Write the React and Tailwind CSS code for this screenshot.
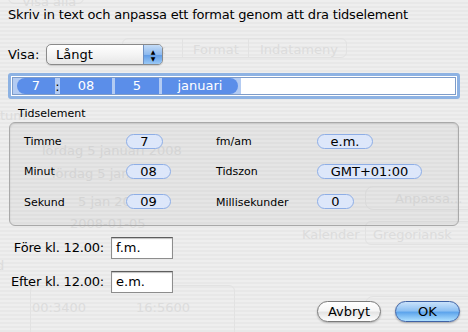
import React from 'react';

const font = { fontFamily: '"Lucida Grande", "DejaVu Sans", sans-serif' };

function Ghost() {
  // faint preferences pane showing through the sheet
  const g = 'absolute text-[#dcdcdc] text-[13px] whitespace-nowrap';
  return (
    <div className="absolute inset-0 pointer-events-none">
      <div className="absolute left-[8px] top-[-12px] w-[76px] h-[16px] rounded-md border border-[#e0e0e0]" />
      <span className={`${g} left-[22px] top-[-8px]`}>Visa alla</span>
      <div className="absolute left-[122px] top-[38px] w-[225px] h-[20px] rounded-md border border-[#e2e2e2] flex">
        <div className="w-[60px] border-r border-[#e2e2e2]" />
        <div className="w-[66px] border-r border-[#e2e2e2]" />
      </div>
      <span className={`${g} left-[158px] top-[40px]`}>k</span>
      <span className={`${g} left-[193px] top-[40px]`}>Format</span>
      <span className={`${g} left-[260px] top-[40px]`}>Indatameny</span>
      <span className={`${g} left-[-18px] top-[106px]`}>Datum</span>
      <span className={`${g} left-[42px] top-[141px]`}>lördag 5 januari 2008</span>
      <span className={`${g} left-[52px] top-[164px]`}>lördag 5 jan 2008</span>
      <span className={`${g} left-[78px] top-[192px]`}>5 jan 2008</span>
      <span className={`${g} left-[70px] top-[214px]`}>2008-01-05</span>
      <div className="absolute left-[365px] top-[186px] w-[110px] h-[24px] rounded-lg border border-[#e2e2e2]" />
      <span className={`${g} left-[395px] top-[189px]`}>Anpassa...</span>
      <span className={`${g} left-[302px] top-[225px]`}>Kalender</span>
      <div className="absolute left-[365px] top-[221px] w-[110px] h-[24px] rounded-md border border-[#e2e2e2]" />
      <span className={`${g} left-[373px] top-[225px]`}>Gregoriansk</span>
      <span className={`${g} left-[-4px] top-[256px]`}>d</span>
      <div className="absolute left-[30px] top-[285px] w-[205px] h-[60px] rounded-md border border-[#e2e2e2]" />
      <span className={`${g} left-[32px] top-[298px]`}>00:3400</span>
      <span className={`${g} left-[136px] top-[298px]`}>16:5600</span>
      <div className="absolute left-[365px] top-[296px] w-[110px] h-[24px] rounded-lg border border-[#e2e2e2]" />
      <span className={`${g} left-[395px] top-[298px]`}>Anpassa...</span>
    </div>
  );
}

function Token({ children, shape }) {
  return (
    <div className={`h-[16px] flex items-center justify-center bg-[#5b8ee9] text-white text-[13px] ${shape}`}>
      {children}
    </div>
  );
}

function Pill({ children, w }) {
  return (
    <div className={`${w} h-[15px] rounded-full border border-[#8eaee6] bg-[#dde7fa] flex items-center justify-center text-[13px] leading-none text-black`}>
      {children}
    </div>
  );
}

function Field({ value }) {
  return (
    <div className="w-[62px] h-[22px] bg-white border border-[#8d8d8d] border-t-[#5e5e5e] shadow-[inset_0_1px_1px_rgba(0,0,0,0.25)] flex items-center px-[4px] text-[13px]">
      {value}
    </div>
  );
}

export default function App() {
  return (
    <div
      className="relative w-[468px] h-[332px] overflow-hidden text-black bg-[repeating-linear-gradient(to_bottom,#eeeeee_0px,#eeeeee_2px,#e8e8e8_2px,#e8e8e8_4px)]"
      style={font}
    >
      <Ghost />
      <div className="relative flex flex-col">
        <p className="pl-[8px] pt-[7px] text-[13px] leading-[16px] tracking-[-0.2px]">
          Skriv in text och anpassa ett format genom att dra tidselement
        </p>

        {/* Visa-popup */}
        <div className="flex items-center mt-[21px] pl-[8px] h-[21px]">
          <span className="text-[13px] w-[38px]">Visa:</span>
          <div className="w-[117px] h-[21px] rounded-[5px] border border-[#8a8a8a] bg-[linear-gradient(to_bottom,#ffffff,#f4f4f4_50%,#e6e6e6)] flex overflow-hidden shadow-[0_1px_1px_rgba(0,0,0,0.15)]">
            <span className="flex-1 pl-[9px] text-[13px] leading-[19px]">Långt</span>
            <div className="w-[19px] border-l border-[#6f8fbf] bg-[linear-gradient(to_bottom,#c4dcf7,#8db9ee_50%,#5e9ae6_51%,#9ac9f6)] flex flex-col items-center justify-center text-[6px] leading-[7px] text-black">
              <span>▲</span>
              <span>▼</span>
            </div>
          </div>
        </div>

        {/* Tokenfält */}
        <div className="mx-[8px] mt-[8px] h-[26px] rounded-[3px] border-[3px] border-[#8db2e3] bg-white p-[1px]">
          <div className="h-full flex items-center border border-[#7e9cc9]">
            <div className="flex items-center h-full bg-[#b3cbf2] pl-[4px] pr-[3px]">
              <Token shape="w-[38px] rounded-l-full">7</Token>
              <span className="w-[5px] text-[13px] text-center leading-none">:</span>
              <Token shape="w-[52px]">08</Token>
              <div className="w-[3px]" />
              <Token shape="w-[44px]">5</Token>
              <div className="w-[3px]" />
              <Token shape="w-[76px] rounded-r-full">januari</Token>
            </div>
          </div>
        </div>

        <span className="pl-[18px] mt-[8px] text-[11px] leading-[13px]">Tidselement</span>

        {/* Grupp */}
        <div className="mx-[9px] mt-[2px] h-[104px] rounded-[6px] border border-[#a9a9a9] bg-black/[0.035] shadow-[inset_0_1px_2px_rgba(0,0,0,0.12)] pl-[14px] pt-[11px]">
          <div className="grid grid-cols-[102px_90px_101px_1fr] auto-rows-[30px] text-[11px]">
            <span className="leading-[15px]">Timme</span>
            <Pill w="w-[37px]">7</Pill>
            <span className="leading-[15px]">fm/am</span>
            <Pill w="w-[56px]">e.m.</Pill>

            <span className="leading-[15px]">Minut</span>
            <Pill w="w-[45px]">08</Pill>
            <span className="leading-[15px]">Tidszon</span>
            <Pill w="w-[105px]">GMT+01:00</Pill>

            <span className="leading-[15px] mt-[1px]">Sekund</span>
            <Pill w="w-[45px]">09</Pill>
            <span className="leading-[15px] mt-[1px]">Millisekunder</span>
            <Pill w="w-[37px]">0</Pill>
          </div>
        </div>

        {/* fm / em */}
        <div className="flex items-center mt-[11px] h-[22px]">
          <span className="w-[105px] text-right pr-[1px] text-[13px] tracking-[-0.2px]">Före kl. 12.00:</span>
          <div className="ml-[6px]"><Field value="f.m." /></div>
        </div>
        <div className="flex items-center mt-[12px] h-[22px]">
          <span className="w-[105px] text-right pr-[1px] text-[13px] tracking-[-0.2px]">Efter kl. 12.00:</span>
          <div className="ml-[6px]"><Field value="e.m." /></div>
        </div>

        {/* Knappar */}
        <div className="flex justify-end gap-[14px] pr-[8px] mt-[8px]">
          <button className="w-[64px] h-[21px] rounded-full border border-[#7a7a7a] bg-[linear-gradient(to_bottom,#ffffff,#f6f6f6_45%,#e4e4e4_55%,#ffffff)] shadow-[0_1px_2px_rgba(0,0,0,0.25)] text-[13px] leading-none">
            Avbryt
          </button>
          <button className="w-[65px] h-[21px] rounded-full border border-[#3f63a6] bg-[linear-gradient(to_bottom,#c9e2fb,#8fc1f3_45%,#5ea5ec_55%,#aee0ff)] shadow-[0_1px_2px_rgba(0,0,0,0.3)] text-[13px] leading-none">
            OK
          </button>
        </div>
      </div>
    </div>
  );
}
